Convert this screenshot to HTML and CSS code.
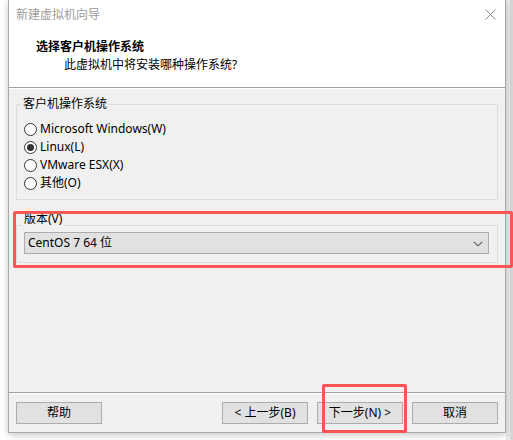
FILE: index.html
```html
<!DOCTYPE html>
<html lang="zh-CN">
<head>
<meta charset="utf-8">
<title>新建虚拟机向导</title>
<link rel="stylesheet" href="styles.css">
</head>
<body>
<div class="dialog">
  <div class="header">
    <div class="titlebar">
      <span class="title">新建虚拟机向导</span>
      <svg class="close" width="11" height="11" viewBox="0 0 11 11"><path d="M0.5 0.5 L10.5 10.5 M10.5 0.5 L0.5 10.5" stroke="#8a8a8a" stroke-width="1" fill="none"/></svg>
    </div>
    <div class="heading">选择客户机操作系统</div>
    <div class="subheading">此虚拟机中将安装哪种操作系统?</div>
  </div>
  <div class="body">
    <fieldset class="group">
      <legend>客户机操作系统</legend>
      <div class="radio"><span class="dot"></span>Microsoft Windows(W)</div>
      <div class="radio"><span class="dot on"></span>Linux(L)</div>
      <div class="radio"><span class="dot"></span>VMware ESX(X)</div>
      <div class="radio"><span class="dot"></span>其他(O)</div>
    </fieldset>
    <fieldset class="group version">
      <legend>版本(V)</legend>
      <div class="combo">
        <span>CentOS 7 64 位</span>
        <svg class="chev" width="10" height="6" viewBox="0 0 10 6"><path d="M0.8 0.8 L5 4.8 L9.2 0.8" stroke="#555" stroke-width="1.1" fill="none"/></svg>
      </div>
    </fieldset>
  </div>
  <div class="footer">
    <button class="btn">帮助</button>
    <div class="spacer"></div>
    <button class="btn">&lt; 上一步(B)</button>
    <button class="btn next">下一步(N) &gt;</button>
    <button class="btn cancel">取消</button>
  </div>
  <div class="mark mark-version"></div>
  <div class="mark mark-next"></div>
</div>
</body>
</html>
```

FILE: styles.css
```css
html, body {
  margin: 0;
  padding: 0;
}
body {
  width: 513px;
  height: 440px;
  overflow: hidden;
  background: linear-gradient(to right, #ffffff 506px, #e9e9e9 506px, #e9e9e9 510px, #d6d6d6 510px);
  font-family: "Noto Sans", "Noto Sans CJK SC", sans-serif;
  font-size: 12px;
  color: #000;
}
.dialog {
  position: relative;
  box-sizing: border-box;
  margin-left: 8px;
  width: 498px;
  height: 433px;
  border: 1px solid #a9a9a9;
  border-top: none;
  background: #f0f0f0;
  box-shadow: 0 2px 7px rgba(0, 0, 0, 0.22);
  display: flex;
  flex-direction: column;
}
.header {
  height: 87px;
  background: #fff;
  border-bottom: 1px solid #a0a0a0;
  flex: none;
}
.titlebar {
  height: 30px;
  display: flex;
  align-items: center;
  justify-content: space-between;
  padding: 0 9px 0 7px;
}
.title {
  color: #9c9c9c;
  line-height: 30px;
}
.close {
  margin-top: -1px;
}
.heading {
  font-weight: bold;
  line-height: 18px;
  padding: 8px 0 0 27px;
}
.subheading {
  line-height: 18px;
  padding-left: 55px;
}
.body {
  flex: 1;
  padding: 8px 7px 0 7px;
  box-shadow: inset 0 1px 0 #fff;
}
.group {
  margin: 0;
  border: 1px solid #dcdcdc;
  padding: 8px 7px 7px 7px;
}
.group legend {
  padding: 0 2px;
  margin-left: -3px;
  line-height: 16px;
}
.radio {
  height: 18px;
  line-height: 18px;
  display: flex;
  align-items: center;
}
.dot {
  box-sizing: border-box;
  width: 13px;
  height: 13px;
  border: 1px solid #333;
  border-radius: 50%;
  background: #fff;
  margin-right: 3px;
  display: flex;
  align-items: center;
  justify-content: center;
}
.dot.on::after {
  content: "";
  width: 7px;
  height: 7px;
  border-radius: 50%;
  background: #333;
}
.version {
  margin-top: 11px;
  padding: 0 8px 8px 7px;
}
.version legend {
  padding-bottom: 12px;
  margin-left: -2px;
}
.combo {
  box-sizing: border-box;
  margin-top: -7px;
  height: 22px;
  width: 465px;
  border: 1px solid #adadad;
  background: #e1e1e1;
  display: flex;
  align-items: center;
  justify-content: space-between;
  padding: 0 5px 0 3px;
  line-height: 20px;
}
.chev {
  margin-top: 1px;
}
.footer {
  flex: none;
  border-top: 1px solid #a0a0a0;
  box-shadow: inset 0 1px 0 #fff;
  padding: 9px 7px 8px 7px;
  display: flex;
  gap: 9px;
}
.spacer {
  flex: 1;
}
.btn {
  box-sizing: border-box;
  width: 86px;
  height: 22px;
  border: 1px solid #adadad;
  background: #e1e1e1;
  font-family: inherit;
  font-size: 12px;
  color: #000;
  padding: 0;
  line-height: 20px;
}
.mark {
  position: absolute;
  border: 3px solid #f85555;
  border-radius: 2px;
  box-sizing: border-box;
}
.mark-version {
  left: 4px;
  top: 211px;
  width: 500px;
  height: 57px;
}
.mark-next {
  left: 313px;
  top: 384px;
  width: 85px;
  height: 49px;
}
```
